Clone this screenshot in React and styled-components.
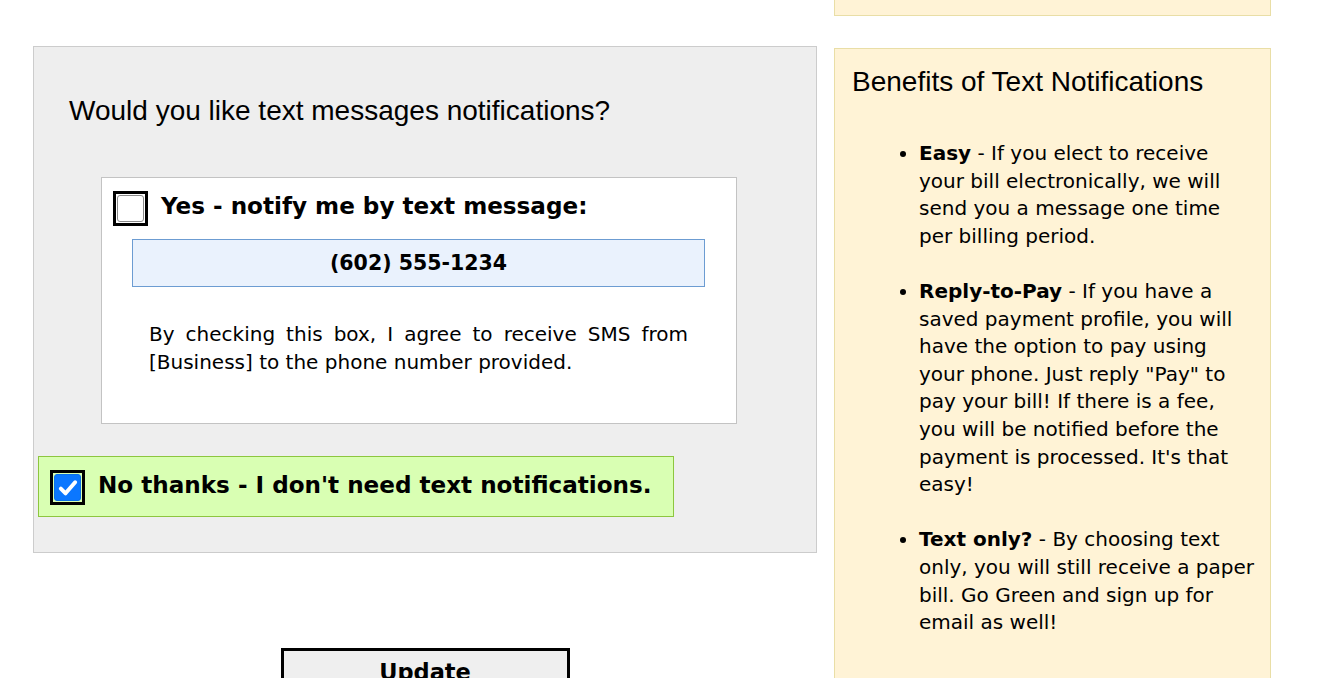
import React, {useState} from 'react';
import styled, {createGlobalStyle} from "styled-components";

const GlobalStyle = createGlobalStyle`
    body {
        margin: 0;
        background: #fff;
        font-family: "DejaVu Sans", Verdana, sans-serif;
        color: #000;
        overflow: hidden;
    }
`;

export default function App() {
    const [wantsText, setWantsText] = useState(false);

    return <Page>
        <GlobalStyle/>
        <LeftColumn>
            <Panel>
                <Question>Would you like text messages notifications?</Question>
                <OptInBox>
                    <OptionRow onClick={() => setWantsText(true)}>
                        <CheckBox checked={wantsText}/>
                        <OptionLabel>Yes - notify me by text message:</OptionLabel>
                    </OptionRow>
                    <PhoneInput defaultValue="(602) 555-1234"/>
                    <Consent>
                        By checking this box, I agree to receive SMS from [Business] to the phone number provided.
                    </Consent>
                </OptInBox>
                <OptOutBox onClick={() => setWantsText(false)}>
                    <CheckBox checked={!wantsText}/>
                    <OptionLabel>No thanks - I don't need text notifications.</OptionLabel>
                </OptOutBox>
            </Panel>
            <ButtonRow>
                <UpdateButton>Update</UpdateButton>
            </ButtonRow>
        </LeftColumn>
        <RightColumn>
            <InfoBox cut/>
            <InfoBox>
                <InfoTitle>Benefits of Text Notifications</InfoTitle>
                <Benefits>
                    <li><b>Easy</b> - If you elect to receive your bill electronically, we will send you a message one time per billing period.</li>
                    <li><b>Reply-to-Pay</b> - If you have a saved payment profile, you will have the option to pay using your phone. Just reply "Pay" to pay your bill! If there is a fee, you will be notified before the payment is processed. It's that easy!</li>
                    <li><b>Text only?</b> - By choosing text only, you will still receive a paper bill. Go Green and sign up for email as well!</li>
                </Benefits>
            </InfoBox>
        </RightColumn>
    </Page>
}

function CheckBox({checked}) {
    return <CheckFrame>
        <CheckInner checked={checked}>
            {checked && <svg width="22" height="22" viewBox="0 0 20 20">
                <path d="M3.5 10.5 L7.8 14.8 L16.5 4.8" fill="none" stroke="#fff" strokeWidth="3.6" strokeLinecap="round" strokeLinejoin="round"/>
            </svg>}
        </CheckInner>
    </CheckFrame>
}

const Page = styled.div`
    display: flex;
    align-items: flex-start;
    gap: 17px;
    padding-left: 33px;
    height: 678px;
    overflow: hidden;
`;

const LeftColumn = styled.div`
    display: flex;
    flex-direction: column;
    width: 784px;
    padding-top: 46px;
`;

const Panel = styled.div`
    background: #eeeeee;
    border: 1px solid #cccccc;
    padding: 48px 0 35px 4px;
`;

const Question = styled.h2`
    margin: 0 0 50px 31px;
    font-family: "Liberation Sans", Arial, sans-serif;
    font-weight: normal;
    font-size: 28px;
    line-height: 32px;
`;

const OptInBox = styled.div`
    box-sizing: border-box;
    margin-left: 63px;
    width: 636px;
    background: #fff;
    border: 1px solid #c3c3c3;
    padding: 13px 0 47px 11px;
`;

const OptionRow = styled.div`
    display: flex;
    align-items: center;
    gap: 13px;
    cursor: pointer;
`;

const OptionLabel = styled.span`
    margin-bottom: 5px;
    font-weight: bold;
    font-size: 23.1px;
`;

const CheckFrame = styled.span`
    display: flex;
    justify-content: center;
    align-items: center;
    box-sizing: border-box;
    width: 35px;
    height: 35px;
    border: 3px solid #000;
    flex-shrink: 0;
`;

const CheckInner = styled.span`
    display: flex;
    justify-content: center;
    align-items: center;
    box-sizing: border-box;
    width: 27px;
    height: 27px;
    border-radius: 3px;
    border: ${({checked}) => checked ? "1px solid #0a6fe8" : "1.5px solid #8a8a8a"};
    background: ${({checked}) => checked ? "#0b77ff" : "#fff"};
`;

const PhoneInput = styled.input`
    display: block;
    box-sizing: border-box;
    margin: 13px 0 0 19px;
    width: 573px;
    height: 48px;
    background: #eaf2fd;
    border: 1px solid #6c9cd2;
    text-align: center;
    font-family: "DejaVu Sans", Verdana, sans-serif;
    font-weight: bold;
    font-size: 20.5px;
    color: #000;
    outline: none;
`;

const Consent = styled.p`
    margin: 33px 0 0 36px;
    width: 539px;
    text-align: justify;
    font-size: 20px;
    line-height: 28px;
`;

const OptOutBox = styled.div`
    display: flex;
    align-items: center;
    gap: 13px;
    margin-top: 32px;
    width: 636px;
    box-sizing: border-box;
    background: #d9ffb3;
    border: 1px solid #8dc63f;
    padding: 13px 11px 11px;
    cursor: pointer;
`;

const ButtonRow = styled.div`
    display: flex;
    justify-content: center;
    margin-top: 95px;
`;

const UpdateButton = styled.button`
    width: 289px;
    height: 48px;
    background: #efefef;
    border: 3px solid #000;
    font-family: "DejaVu Sans", Verdana, sans-serif;
    font-weight: bold;
    font-size: 22.5px;
    color: #000;
    cursor: pointer;
`;

const RightColumn = styled.div`
    display: flex;
    flex-direction: column;
    gap: 32px;
    width: 437px;
`;

const InfoBox = styled.div`
    box-sizing: border-box;
    background: #fff3d6;
    border: 1px solid #e9dea6;
    border-top: ${({cut}) => cut ? "none" : "1px solid #e9dea6"};
    height: ${({cut}) => cut ? "16px" : "auto"};
    padding: ${({cut}) => cut ? "0" : "17px 15px 60px 17px"};
`;

const InfoTitle = styled.h3`
    margin: 0 0 42px;
    font-family: "Liberation Sans", Arial, sans-serif;
    font-weight: normal;
    font-size: 28px;
    line-height: 32px;
`;

const Benefits = styled.ul`
    margin: 0;
    padding: 0 0 0 67px;
    font-size: 20px;
    line-height: 27.6px;

    li {
        margin-bottom: 27.6px;
    }
`;
